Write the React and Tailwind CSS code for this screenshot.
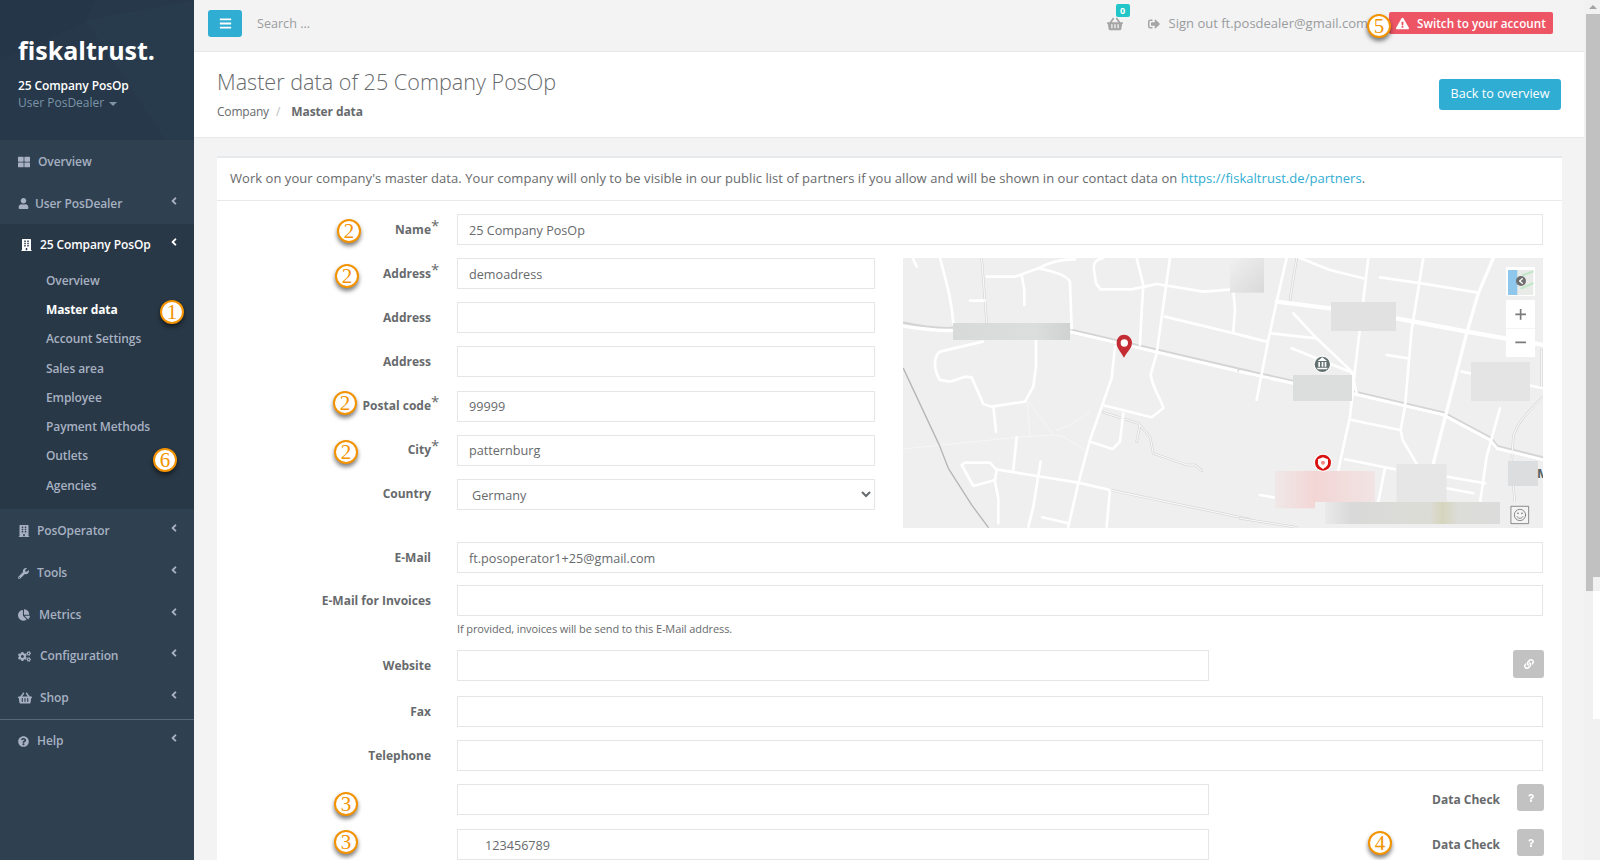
import React from "react";
import {
  FaAngleLeft,
  FaBars,
  FaBuilding,
  FaChartPie,
  FaCogs,
  FaExclamationTriangle,
  FaLink,
  FaQuestion,
  FaQuestionCircle,
  FaShoppingBasket,
  FaSignOutAlt,
  FaThLarge,
  FaUser,
  FaWrench,
} from "react-icons/fa";

const subItems = [
  "Overview",
  "Master data",
  "Account Settings",
  "Sales area",
  "Employee",
  "Payment Methods",
  "Outlets",
  "Agencies",
];

const NavItem = ({ icon, label, gap, chevron = true, height = "h-[42px]" }) => (
  <div className={`flex items-center pl-[18px] pr-[14px] text-[#a7b1c2] font-semibold text-[12px] tracking-[-0.1px] ${height}`}>
    <span className={`flex items-center text-[#a7b1c2] ${gap}`}>{icon}</span>
    <span>{label}</span>
    {chevron && <FaAngleLeft className="ml-auto mb-[6px] text-[12px]" />}
  </div>
);

const Sidebar = () => (
  <div className="w-[194px] shrink-0 bg-[#2f4050] flex flex-col">
    <div className="relative h-[140px] bg-[#263849] overflow-hidden pl-[18px] pt-[32px]">
      <svg className="absolute inset-0" width="194" height="140" viewBox="0 0 194 140">
        <polygon points="85,20 194,0 194,140 165,140" fill="#2a3d4f" opacity="0.5" />
        <polygon points="0,0 95,0 85,22 0,60" fill="#24364a" opacity="0.6" />
      </svg>
      <div className="relative">
        <div className="font-bold text-[25px] leading-[36px] text-white">fiskaltrust.</div>
        <div className="mt-[9px] text-[12px] leading-[17px] font-semibold tracking-[-0.1px] text-white">25 Company PosOp</div>
        <div className="flex items-center text-[12px] leading-[17px] text-[#7c93a8]">
          User PosDealer
          <span className="ml-[5px] mt-[2px] w-0 h-0 border-x-[4px] border-x-transparent border-t-[4px] border-t-[#7c93a8]" />
        </div>
      </div>
    </div>
    <NavItem icon={<FaThLarge className="text-[12px]" />} gap="w-[20px]" label="Overview" chevron={false} height="h-[43px]" />
    <NavItem icon={<FaUser className="text-[11px]" />} gap="w-[17px]" label="User PosDealer" height="h-[41px]" />
    <div className="bg-[#293846] h-[285px]">
      <div className="flex items-center h-[42px] pl-[21px] pr-[14px] text-white font-semibold text-[12px] tracking-[-0.1px]">
        <FaBuilding className="text-[12px] w-[11px] mr-[8px]" />
        <span>25 Company PosOp</span>
        <FaAngleLeft className="ml-auto mb-[6px] text-[12px]" />
      </div>
      <div className="pl-[46px]">
        {subItems.map((s) => (
          <div
            key={s}
            className={`h-[29.3px] flex items-center text-[12px] tracking-[-0.1px] ${
              s === "Master data" ? "text-white font-bold" : "text-[#a7b1c2] font-semibold"
            }`}
          >
            {s}
          </div>
        ))}
      </div>
    </div>
    <NavItem icon={<FaBuilding className="text-[12px]" />} gap="w-[19px]" label="PosOperator" height="h-[43px]" />
    <NavItem icon={<FaWrench className="text-[11px]" />} gap="w-[19px]" label="Tools" />
    <NavItem icon={<FaChartPie className="text-[12px]" />} gap="w-[21px]" label="Metrics" height="h-[41px]" />
    <NavItem icon={<FaCogs className="text-[13px]" />} gap="w-[22px]" label="Configuration" />
    <NavItem icon={<FaShoppingBasket className="text-[14px]" />} gap="w-[22px]" label="Shop" />
    <div className="border-t border-[#55677a]">
      <NavItem icon={<FaQuestionCircle className="text-[11px]" />} gap="w-[19px]" label="Help" />
    </div>
  </div>
);

const Topbar = () => (
  <div className="h-[52px] shrink-0 border-b border-[#e7eaec] flex items-center pl-[14px] pr-[31px]">
    <button className="w-[34px] h-[27px] mb-[5px] rounded-[3px] bg-[#2fadd3] text-white flex items-center justify-center">
      <FaBars className="text-[13px]" />
    </button>
    <span className="ml-[15px] mb-[3px] text-[12.6px] text-[#999c9e]">Search ...</span>
    <div className="relative ml-auto mb-[4px] text-[#a5a5a5]">
      <FaShoppingBasket className="text-[16px]" />
      <span className="absolute left-[9px] top-[-12px] w-[14px] h-[13px] rounded-[2px] bg-[#23c6c8] text-white text-[9px] font-bold leading-[13px] text-center">0</span>
    </div>
    <FaSignOutAlt className="ml-[25px] mb-[4px] text-[12px] text-[#a5a5a5]" />
    <span className="ml-[9px] mb-[4px] text-[13px] text-[#999c9e] font-medium">Sign out ft.posdealer@gmail.com</span>
    <div className="ml-[21px] mb-[5px] w-[164px] h-[22px] rounded-[2px] bg-[#ed5565] text-white text-[11.7px] font-semibold flex items-center pl-[7px] pt-[1px]">
      <FaExclamationTriangle className="text-[13px] mr-[8px]" />
      Switch to your account
    </div>
  </div>
);

const PageHeading = () => (
  <div className="h-[86px] shrink-0 bg-white border-b border-[#e7eaec] flex pl-[23px] pr-[23px]">
    <div>
      <h2 className="mt-[14px] text-[21.6px] leading-[32px] font-light text-[#676a6c]">Master data of 25 Company PosOp</h2>
      <div className="mt-[5px] flex text-[12px] leading-[18px] text-[#676a6c]">
        <span className="tracking-[-0.2px]">Company</span>
        <span className="ml-[7px] text-[#b9bcbe]">/</span>
        <span className="ml-[11px] font-bold tracking-[-0.1px]">Master data</span>
      </div>
    </div>
    <button className="ml-auto mt-[27px] w-[122px] h-[31px] rounded-[3px] bg-[#2fadd3] text-white text-[12.6px]">Back to overview</button>
  </div>
);

const Field = ({ className = "flex-1", value = "", pad = "pl-[11px]" }) => (
  <input
    readOnly
    value={value}
    className={`h-[31px] border border-[#e5e6e7] bg-white text-[12.65px] text-[#676a6c] outline-none ${pad} ${className}`}
  />
);

const Row = ({ label, req, className = "mb-[13px]", children }) => (
  <div className={`flex items-center ${className}`}>
    <div className="w-[214px] shrink-0 text-right text-[12px] font-bold text-[#676a6c]">
      <span className="relative">
        {label}
        {req && <span className="absolute left-full top-[-7px] text-[15px] font-normal">*</span>}
      </span>
    </div>
    <div className="flex-1 flex items-center ml-[26px] min-w-0">{children}</div>
  </div>
);

const GreyBtn = ({ className, children }) => (
  <button className={`ml-auto mr-[-1px] self-start rounded-[3px] bg-[#c2c2c2] text-white flex items-center justify-center ${className}`}>
    {children}
  </button>
);

const DataCheck = () => (
  <>
    <span className="ml-auto text-[12px] font-bold text-[#676a6c]">Data Check</span>
    <button className="ml-[17px] mr-[-1px] self-start w-[27px] h-[27px] rounded-[3px] bg-[#c2c2c2] text-white flex items-center justify-center">
      <FaQuestion className="text-[8px]" />
    </button>
  </>
);

const MapView = () => (
  <svg className="block" width="640" height="270" viewBox="903 258 640 270">
    <defs>
      <linearGradient id="g1" x1="0" x2="1">
        <stop offset="0" stopColor="#d8d9d9" />
        <stop offset="0.7" stopColor="#dcdddd" />
        <stop offset="1" stopColor="#d0d1d1" />
      </linearGradient>
      <linearGradient id="g2" x1="0" y1="0" x2="1" y2="1">
        <stop offset="0" stopColor="#f0f0f0" />
        <stop offset="1" stopColor="#d9d9d9" />
      </linearGradient>
      <linearGradient id="g3" x1="0" x2="1">
        <stop offset="0" stopColor="#f0e8e8" />
        <stop offset="0.4" stopColor="#f3d5d5" />
        <stop offset="1" stopColor="#f1e4e4" />
      </linearGradient>
      <linearGradient id="g4" x1="0" x2="1">
        <stop offset="0" stopColor="#eaeaea" />
        <stop offset="0.15" stopColor="#d9d9d9" />
        <stop offset="0.6" stopColor="#dcdcd6" />
        <stop offset="0.67" stopColor="#d5d5bd" />
        <stop offset="0.76" stopColor="#dcdcd8" />
        <stop offset="1" stopColor="#dcdcdc" />
      </linearGradient>
    </defs>
    <rect x="903" y="258" width="640" height="270" fill="#efefef" />

    {/* left half of the map, coords as in the crop at 890,250 x3 */}
    <g transform="translate(890 250) scale(0.3333)" fill="none" strokeLinejoin="round" strokeLinecap="round">
      <path d="M40,597 L380,562 L490,555 L520,560 L585,600 M415,455 L490,555 M412,455 L420,560 M500,540 L540,525 L600,487" stroke="#f6f6f6" strokeWidth="3" />
      <path d="M40,355 L150,590 L175,655 L245,765 L295,832" stroke="#b5b5b5" strokeWidth="4" />
      <path d="M275,24 L290,220 M660,720 L1080,808 M640,487 L745,520 L780,560 L790,610 L890,645 L915,645 L935,662 M750,525 L740,575" stroke="#cfcfcf" strokeWidth="7" />
      <path d="M40,222 C100,235 150,240 190,238 M540,243 L1080,368" stroke="#d4d4d4" strokeWidth="15" />
      <g stroke="#ffffff" strokeWidth="8">
        <path d="M150,24 C170,100 185,150 190,220 M68,24 L80,50" />
        <path d="M290,80 H375 L445,55 C480,35 520,28 555,28 M445,55 C480,60 530,75 540,95 L545,235" />
        <path d="M395,76 L403,120 V165 M240,152 H285" />
        <path d="M640,24 C615,30 610,40 612,60 L618,100 L632,118 H725 L800,102 L940,125 L1030,118 L1035,180 L1030,245" />
        <path d="M740,24 L760,105 L755,185 L750,285" />
        <path d="M840,24 L800,310 L782,375 C790,420 815,450 820,475 L785,502 L640,466" />
        <path d="M825,200 L1080,262" />
        <path d="M278,275 L150,305 C130,320 130,360 150,390 L180,395 L225,380 L245,382 L280,462 L305,470 L405,455 L430,410 L438,350 V270" />
        <path d="M310,470 L318,545" />
        <path d="M675,290 L665,385 L600,570 L565,700 L535,830" />
        <path d="M700,490 L690,575 L668,597 L600,575" />
        <path d="M215,645 L250,708 L315,690 L320,660 L300,638 H225 Z M320,658 L440,678 L565,698 L660,720 L650,830 M380,562 L370,660 M452,635 L430,770 L415,830 M315,695 L325,745 V820 M457,802 L535,820" />
        <path d="M40,228 C100,238 150,243 190,241 M540,246 L1080,372" strokeWidth="10" />
      </g>
      <path d="M275,24 L290,220 M660,720 L1080,808 M640,487 L745,520 L780,560 L790,610 L890,645 L915,645 L935,662 M750,525 L740,575" stroke="#f7f7f7" strokeWidth="4" />
      <rect x="189" y="219" width="351" height="51" fill="url(#g1)" />
      <path d="M702,323 C692,303 680,296 680,278 C680,264 690,254 702,254 C714,254 726,264 726,278 C726,296 712,303 702,323 Z" fill="#c42c33" />
      <circle cx="703" cy="279" r="11" fill="#ffffff" />
    </g>

    {/* right half of the map, crop at 1240,250 x3 */}
    <g transform="translate(1240 250) scale(0.3333)" fill="none" strokeLinejoin="round" strokeLinecap="round">
      <path d="M0,362 L160,397 M335,427 L610,492 L750,567 L770,592 L910,627" stroke="#d4d4d4" strokeWidth="15" />
      <path d="M910,440 C860,490 830,520 820,560 L815,640 L830,830 M905,300 V410 M170,24 L150,150 M0,805 L170,832" stroke="#cfcfcf" strokeWidth="7" />
      <g stroke="#ffffff" strokeWidth="8">
        <path d="M140,24 L110,155 L85,270 L50,450" />
        <path d="M180,24 L270,60 L370,85" />
        <path d="M385,24 L345,360 L330,500 L295,660" />
        <path d="M110,155 L270,175 L470,205 L680,245 L910,285" strokeWidth="13" />
        <path d="M420,82 L545,100 L715,128" />
        <path d="M550,24 L515,240 L495,470 L482,540 L488,570 L535,650" />
        <path d="M760,24 L715,130 L680,250 L580,640" strokeWidth="10" />
        <path d="M0,255 L80,275 M95,250 L230,265" />
        <path d="M155,295 L330,365 M160,190 L230,265 L335,365 L350,430" />
        <path d="M440,315 L505,325 M665,365 L910,415" />
        <path d="M780,475 L740,620 L720,760" />
        <path d="M335,510 L480,540 M315,628 L465,658 M620,680 L735,700 M620,715 L700,730 M435,655 L410,780 M60,735 L230,765" />
        <path d="M0,365 L160,400 M335,430 L610,495 L750,570 L770,595 L910,630" strokeWidth="10" />
      </g>
      <path d="M910,440 C860,490 830,520 820,560 L815,640 L830,830 M905,300 V410 M170,24 L150,150 M0,805 L170,832" stroke="#f7f7f7" strokeWidth="4" />

      <rect x="-30" y="24" width="102" height="104" fill="url(#g2)" />
      <rect x="273" y="156" width="195" height="87" fill="#e1e1e1" />
      <rect x="159" y="375" width="177" height="78" fill="#dcdede" />
      <rect x="693" y="336" width="177" height="117" fill="#e4e4e4" />
      <rect x="804" y="633" width="90" height="75" fill="#dcdddf" />
      <rect x="105" y="663" width="300" height="112" fill="url(#g3)" />
      <rect x="470" y="642" width="150" height="118" fill="#e6e6e6" />
      <rect x="225" y="756" width="687" height="76" fill="#efefef" />
      <rect x="255" y="756" width="525" height="66" fill="url(#g4)" />

      <circle cx="247" cy="343" r="26" fill="#ffffff" />
      <circle cx="247" cy="343" r="23" fill="#62706f" />
      <path d="M232,358 H262 V353 H232 Z M235,350 H240 V336 H235 Z M245,350 H250 V336 H245 Z M254,350 H259 V336 H254 Z M233,333 H261 L247,322 Z" fill="#ffffff" />

      <circle cx="249" cy="638" r="27" fill="#ffffff" />
      <circle cx="249" cy="638" r="24" fill="#d91212" />
      <path d="M234,628 L249,622 L264,628 V640 C264,648 256,653 249,657 C242,653 234,648 234,640 Z" fill="#ffffff" />
      <circle cx="249" cy="638" r="6" fill="#f08a8a" />

      <rect x="798" y="51" width="87" height="87" fill="#ffffff" />
      <rect x="804" y="60" width="76" height="75" fill="#e8ebe8" />
      <rect x="804" y="60" width="28" height="75" fill="#8ec6ec" />
      <path d="M845,115 L878,100 M850,75 L878,65" stroke="#bfe6c6" strokeWidth="6" />
      <circle cx="843" cy="93" r="15" fill="#6f6f6f" />
      <path d="M847,86 L839,93 L847,100" stroke="#ffffff" strokeWidth="4" />

      <rect x="798" y="150" width="87" height="171" fill="#ffffff" />
      <path d="M798,235.500 H885" stroke="#efefef" strokeWidth="2" />
      <path d="M842,177 V209 M826,193 H858 M826,277 H858" stroke="#7b7b7b" strokeWidth="5" strokeLinecap="butt" />

      <rect x="814" y="769" width="52" height="52" fill="#f4f4f4" stroke="#777777" strokeWidth="2.5" />
      <circle cx="840" cy="795" r="17" stroke="#777777" strokeWidth="2.500" />
      <circle cx="834" cy="790" r="2.500" fill="#777777" />
      <circle cx="846" cy="790" r="2.500" fill="#777777" />
      <path d="M831,800 C835,807 845,807 849,800" stroke="#777777" strokeWidth="2.5" />
    </g>
    <text x="1537" y="478" fontFamily="'Open Sans'" fontWeight="700" fontSize="13" fill="#55605f">M</text>
  </svg>
);

const MasterForm = () => (
  <div className="pt-[13px] pr-[19px]">
    <Row label="Name" req>
      <Field value="25 Company PosOp" />
    </Row>
    <div className="flex mb-[14px]">
      <div className="w-[658px] shrink-0 flex flex-col gap-[13.2px]">
        <Row label="Address" req className="">
          <Field value="demoadress" />
        </Row>
        <Row label="Address" className="">
          <Field />
        </Row>
        <Row label="Address" className="">
          <Field />
        </Row>
        <Row label="Postal code" req className="">
          <Field value="99999" />
        </Row>
        <Row label="City" req className="">
          <Field value="patternburg" />
        </Row>
        <Row label="Country" className="">
          <select
            defaultValue="Germany"
            className="flex-1 h-[31px] border border-[#e5e6e7] bg-white text-[12.65px] text-[#676a6c] pl-[10px] pt-[1px] outline-none"
          >
            <option>Germany</option>
          </select>
        </Row>
      </div>
      <div className="ml-[28px]">
        <MapView />
      </div>
    </div>
    <Row label="E-Mail" className="mb-[12px]">
      <Field value="ft.posoperator1+25@gmail.com" />
    </Row>
    <Row label="E-Mail for Invoices" className="">
      <Field />
    </Row>
    <div className="ml-[240px] mt-[5px] mb-[13px] h-[16px] text-[11px] leading-[16px] tracking-[-0.1px] text-[#676a6c]">
      If provided, invoices will be send to this E-Mail address.
    </div>
    <Row label="Website" className="mb-[15px]">
      <Field className="w-[752px]" />
      <GreyBtn className="w-[31px] h-[28px]">
        <FaLink className="text-[10px]" />
      </GreyBtn>
    </Row>
    <Row label="Fax">
      <Field />
    </Row>
    <Row label="Telephone">
      <Field />
    </Row>
    <Row label="" className="mb-[14px]">
      <Field className="w-[752px]" />
      <DataCheck />
    </Row>
    <Row label="">
      <Field className="w-[752px]" value="123456789" pad="pl-[27px]" />
      <DataCheck />
    </Row>
  </div>
);

const Badge = ({ n, pos }) => (
  <div
    className={`absolute z-10 w-[24px] h-[24px] rounded-full bg-white border-[2px] border-[#f39300] text-[#f39300] font-['Liberation_Serif'] text-[21px] leading-[20px] text-center shadow-[0_3px_4px_rgba(0,0,0,0.5)] ${pos}`}
  >
    {n}
  </div>
);

const Scrollbar = () => (
  <div className="w-[16px] shrink-0 bg-[#f1f1f1] pl-[2px]">
    <div className="h-[14px] w-[14px] flex items-center justify-center">
      <span className="w-0 h-0 border-x-[4px] border-x-transparent border-b-[4px] border-b-[#a3a3a3]" />
    </div>
    <div className="w-[14px] h-[563px] bg-[#c1c1c1]" />
    <div className="w-[7px] h-[14px] bg-[#c1c1c1]" />
    <div className="ml-[7px] w-[7px] h-[128px] bg-white" />
  </div>
);

const App = () => {
  return (
    <div className="relative flex w-[1600px] h-[860px] overflow-hidden bg-[#f3f3f4] font-['Open_Sans',sans-serif]">
      <Sidebar />
      <div className="flex-1 min-w-0 flex flex-col">
        <Topbar />
        <PageHeading />
        <div className="pl-[23px] pr-[22px] pt-[18px]">
          <div className="bg-white border-t-2 border-[#e7eaec] h-[720px]">
            <div className="h-[43px] border-b border-[#e7eaec] flex items-center pl-[13px] text-[13px] font-medium tracking-[0.045px] text-[#676a6c]">
              <span>
                Work on your company's master data. Your company will only to be visible in our public list of partners
                if you allow and will be shown in our contact data on{" "}
                <span className="text-[#2fadd3]">https://fiskaltrust.de/partners</span>.
              </span>
            </div>
            <MasterForm />
          </div>
        </div>
      </div>
      <Scrollbar />

      <Badge n="1" pos="left-[160px] top-[300px]" />
      <Badge n="6" pos="left-[153px] top-[448px]" />
      <Badge n="2" pos="left-[337px] top-[219px]" />
      <Badge n="2" pos="left-[335px] top-[264px]" />
      <Badge n="2" pos="left-[333px] top-[391px]" />
      <Badge n="2" pos="left-[334px] top-[440px]" />
      <Badge n="3" pos="left-[334px] top-[792px]" />
      <Badge n="3" pos="left-[334px] top-[830px]" />
      <Badge n="4" pos="left-[1368px] top-[831px]" />
      <Badge n="5" pos="left-[1367px] top-[14px]" />
    </div>
  );
};

export default App;
